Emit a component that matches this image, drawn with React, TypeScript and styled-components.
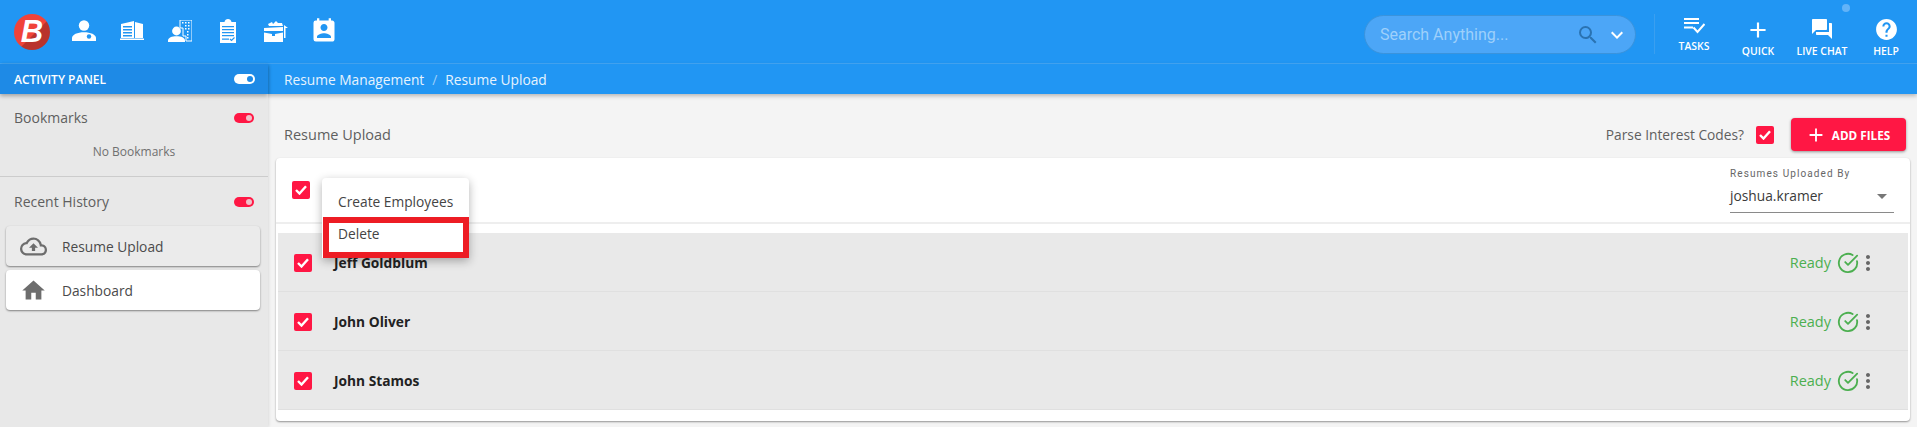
import React from 'react'
import styled, { createGlobalStyle } from 'styled-components'
import {
  MdAdd,
  MdArrowDropDown,
  MdHelp,
  MdHome,
  MdKeyboardArrowDown,
  MdMoreVert,
  MdOutlineCloudUpload,
  MdPermContactCalendar,
  MdQuestionAnswer,
  MdSearch,
} from 'react-icons/md'
import { LuCircleCheckBig } from 'react-icons/lu'

const GlobalStyle = createGlobalStyle`
  html, body {
    margin: 0;
    padding: 0;
    background: #f4f4f4;
    font-family: "Open Sans", "Liberation Sans", sans-serif;
  }
  * { box-sizing: border-box; }
`

const PersonIcon = () => (
  <svg width="24" height="21" viewBox="0 0 24 21" fill="#fff">
    <circle cx="12" cy="5.500" r="5.200" />
    <path d="M0 21v-3c0-3.600 5.500-5.800 12-5.800s12 2.200 12 5.800v3z" />
    <circle cx="17" cy="16.500" r="2.200" fill="#2196f3" />
  </svg>
)

const BuildingIcon = () => (
  <svg width="24" height="19" viewBox="0 0 24 19" fill="#fff">
    <path d="M1 3l13-3v17H1z" />
    <path d="M15 1l8 2v14h-8z" />
    <path d="M0 17.500h24V19H0z" />
    <path d="M3 5h9v1.400H3zM3 8h9v1.400H3zM3 11h9v1.400H3zM3 14h9v1.400H3z" fill="#2196f3" />
  </svg>
)

const AgentIcon = () => (
  <svg width="24" height="22" viewBox="0 0 24 22" fill="#fff">
    <path d="M12 0h12v21h-6v-5h-3V8h-3z" fill="none" stroke="#fff" strokeWidth="1" />
    <path d="M14 2h1.500v1.500H14zM17 2h1.500v1.500H17zM20 2h1.500v1.500H20zM17 5h1.500v1.500H17zM20 5h1.500v1.500H20zM17 8h1.500v1.500H17zM20 8h1.500v1.500H20zM19 11h1.500v1.500H19zM19 14h1.500v1.500H19zM19 17h1.500v1.500H19z" />
    <circle cx="8.500" cy="11" r="4.400" />
    <path d="M0 22v-1.500c0-2.800 3.800-4.300 8.500-4.300s8.500 1.500 8.500 4.300V22z" />
  </svg>
)

const ClipboardIcon = () => (
  <svg width="16" height="24" viewBox="0 0 16 24" fill="#fff">
    <path d="M0 3h4.500c.3-1.700 1.800-3 3.500-3s3.200 1.300 3.500 3H16v21H0z" />
    <path d="M2 7h12v1.300H2zM2 10h12v1.300H2zM2 13h12v1.300H2zM2 16h12v1.300H2zM2 19.500h7v1.300H2z" fill="#2196f3" />
    <path d="M10 20l1.500 1.500 3-3" fill="none" stroke="#2196f3" strokeWidth="1.200" />
  </svg>
)

const BriefcaseIcon = () => (
  <svg width="24" height="24" viewBox="0 0 24 24" fill="#fff">
    <path d="M4 5l4-2 1 2 3-3 2 2 4 0 1 3H5z" />
    <path d="M0 9l19-1 0 4H0z" />
    <path d="M0 13.500l8 1.500v2h3v-2l8-1.500V23H0z" />
    <path d="M20 6l4 3-2.500 0V19h-1.500z" />
  </svg>
)

const TasksIcon = () => (
  <svg width="21" height="16" viewBox="0 0 21 16" fill="none" stroke="#fff" strokeWidth="1.800">
    <path d="M0 1h15M0 5h15M0 9.500h9" />
    <path d="M9.500 9.500l4 4.500 7-8" strokeWidth="2" />
  </svg>
)

const CheckMark = () => (
  <svg width="12" height="10" viewBox="0 0 12 10" fill="none" stroke="#fff" strokeWidth="2.400">
    <path d="M1 5l3.500 3.500L11 1.200" />
  </svg>
)

const Logo = styled.div`
  width: 36px;
  height: 36px;
  flex: none;
  border-radius: 50%;
  background: linear-gradient(135deg, #f0433a 55%, #b9332c 56%);
  display: flex;
  align-items: center;
  justify-content: center;
  color: #fff;
  font-family: "Liberation Sans", Arial, sans-serif;
  font-weight: 700;
  font-style: italic;
  font-size: 31px;
  line-height: 1;
`

const Page = styled.div`
  width: 1917px;
  height: 427px;
  overflow: hidden;
  display: flex;
  flex-direction: column;
`

const Header = styled.header`
  height: 64px;
  flex: none;
  background: #2196f3;
  border-bottom: 1px solid #43a6f5;
  display: flex;
  align-items: center;
  padding-left: 14px;
`

const NavIcons = styled.nav`
  display: flex;
  align-items: center;
  margin: -2px 0 0 10px;
`

const NavIcon = styled.div`
  width: 48px;
  height: 30px;
  display: flex;
  align-items: center;
  justify-content: center;
`

const HeaderRight = styled.div`
  margin-left: auto;
  margin-right: -1px;
  align-self: stretch;
  display: flex;
  align-items: flex-start;
  position: relative;
`

const Search = styled.div`
  width: 272px;
  height: 39px;
  margin-top: 15px;
  border-radius: 20px;
  background: #4ca6f7;
  border: 1px solid #3a93dc;
  display: flex;
  align-items: center;
  padding: 0 6px 0 15px;
  font-family: Roboto, "Liberation Sans", sans-serif;
  font-size: 16px;
  color: #9ed0fb;
`

const SearchText = styled.span`
  flex: 1;
`

const SearchDivider = styled.div`
  width: 1px;
  height: 40px;
  margin: 14px 7px 0 18px;
  background: #3a9ff0;
`

const ActionList = styled.div`
  display: flex;
  align-items: flex-start;
`

const Action = styled.div<{ $top: number; $gap: number }>`
  width: 64px;
  display: flex;
  flex-direction: column;
  align-items: center;
  gap: ${(p) => p.$gap}px;
  color: #fff;
  font-size: 10.400px;
  font-weight: 600;
  line-height: 13px;
  padding-top: ${(p) => p.$top}px;
  white-space: nowrap;
`

const StatusDot = styled.span`
  position: absolute;
  width: 8px;
  height: 8px;
  border-radius: 50%;
  background: #62b3f8;
  top: 4px;
  right: 68px;
`

const Body = styled.div`
  flex: 1;
  display: flex;
  min-height: 0;
`

const SideColumn = styled.aside`
  width: 268px;
  flex: none;
  display: flex;
  flex-direction: column;
  background: #e8e8e8;
  box-shadow: 1px 0 3px rgba(0, 0, 0, 0.1);
  position: relative;
  z-index: 1;
`

const ActivityBar = styled.div`
  height: 30px;
  flex: none;
  background: #1e8ae6;
  box-shadow: 0 2px 4px rgba(0, 0, 0, 0.3);
  display: flex;
  align-items: center;
  justify-content: space-between;
  padding: 0 13px 0 14px;
  color: #fff;
  font-size: 12px;
  font-weight: 600;
`

const Toggle = styled.span<{ $on: string; $knob: string; $w: number }>`
  width: ${(p) => p.$w}px;
  height: 10px;
  border-radius: 5px;
  background: ${(p) => p.$on};
  display: flex;
  align-items: center;
  justify-content: flex-end;
  padding-right: 2px;
  &::after {
    content: '';
    width: 6px;
    height: 6px;
    border-radius: 50%;
    background: ${(p) => p.$knob};
  }
`

const SideSection = styled.section<{ $border?: boolean }>`
  padding: ${(p) => (p.$border ? '13px' : '14px')} 14px 0;
  height: ${(p) => (p.$border ? '83px' : 'auto')};
  border-bottom: ${(p) => (p.$border ? '1px solid #cccccc' : 'none')};
`

const SideTitleRow = styled.div`
  display: flex;
  align-items: center;
  justify-content: space-between;
  font-size: 14px;
  line-height: 22px;
  color: #5f5f5f;
`

const EmptyNote = styled.div`
  margin-top: 15px;
  text-align: center;
  font-size: 12px;
  line-height: 15px;
  color: #707070;
`

const HistoryList = styled.div`
  display: flex;
  flex-direction: column;
  gap: 4px;
  padding: 13px 8px 0 6px;
`

const HistoryItem = styled.div<{ $active?: boolean }>`
  height: 40px;
  border-radius: 4px;
  background: ${(p) => (p.$active ? '#ebebeb' : '#ffffff')};
  box-shadow: 0 1px 2px rgba(0, 0, 0, 0.45);
  display: flex;
  align-items: center;
  font-size: 13.750px;
  color: #4a4a4a;
`

const HistoryIcon = styled.span`
  width: 56px;
  padding-left: 14px;
  display: flex;
  color: #6d6d6d;
  font-size: 27px;
`

const MainColumn = styled.main`
  flex: 1;
  min-width: 0;
  display: flex;
  flex-direction: column;
`

const Breadcrumbs = styled.div`
  height: 30px;
  flex: none;
  background: #2196f3;
  box-shadow: 0 2px 4px rgba(0, 0, 0, 0.25);
  display: flex;
  align-items: center;
  padding-left: 16px;
  gap: 8px;
  color: #e6f3fe;
  font-size: 13.750px;
`

const Crumbsep = styled.span`
  color: #9ccffa;
`

const Content = styled.div`
  flex: 1;
  padding: 0 7px 0 8px;
  position: relative;
`

const TitleRow = styled.div`
  height: 64px;
  display: flex;
  align-items: center;
  padding: 17px 4px 0 8px;
`

const PageTitle = styled.h1`
  margin: 0;
  font-size: 14.500px;
  font-weight: 400;
  color: #5f5f5f;
  flex: 1;
`

const ParseLabel = styled.span`
  font-size: 13.750px;
  color: #5f5f5f;
  margin-right: 12px;
`

const Checkbox = styled.span`
  width: 18px;
  height: 18px;
  flex: none;
  border-radius: 2px;
  background: #ff1744;
  display: inline-flex;
  align-items: center;
  justify-content: center;
`

const AddButton = styled.button`
  margin-left: 17px;
  width: 115px;
  height: 33px;
  border: 0;
  border-radius: 4px;
  background: #ff1744;
  box-shadow: 0 1px 3px rgba(0, 0, 0, 0.4);
  color: #fff;
  font-family: inherit;
  font-size: 11.700px;
  font-weight: 700;
  display: flex;
  align-items: center;
  justify-content: center;
  gap: 5px;
  padding: 0 2px 0 0;
`

const Card = styled.div`
  height: 263px;
  background: #fff;
  border-radius: 4px;
  box-shadow: 0 1px 2px rgba(0, 0, 0, 0.4);
  display: flex;
  flex-direction: column;
`

const CardHeader = styled.div`
  height: 66px;
  flex: none;
  border-bottom: 2px solid #eeeeee;
  display: flex;
  align-items: center;
  justify-content: space-between;
  padding: 0 16px 0 16px;
`

const Picker = styled.div`
  width: 164px;
`

const PickerLabel = styled.div`
  font-family: Roboto, "Liberation Sans", sans-serif;
  font-size: 10px;
  letter-spacing: 1.100px;
  line-height: 12px;
  color: #666;
`

const PickerValue = styled.div`
  height: 33px;
  border-bottom: 1px solid #8a8a8a;
  display: flex;
  align-items: center;
  justify-content: space-between;
  font-size: 13.750px;
  color: #3a3a3a;
`

const PickerArrow = styled.span`
  display: flex;
  color: #777;
  font-size: 24px;
  margin-right: 0;
`

const Rows = styled.div`
  margin: 9px 2px 0;
`

const Row = styled.div`
  height: 59px;
  background: #e9e9e9;
  border-bottom: 1px solid #e0e0e0;
  display: flex;
  align-items: center;
  padding: 1px 28px 0 16px;
`

const RowName = styled.span`
  margin-left: 22px;
  flex: 1;
  font-size: 13.750px;
  font-weight: 700;
  color: #222;
`

const ReadyText = styled.span`
  font-size: 14.500px;
  color: #4caf50;
`

const ReadyIcon = styled.span`
  display: flex;
  color: #4caf50;
  font-size: 22px;
  margin-left: 6px;
`

const MoreIcon = styled.span`
  display: flex;
  color: #666;
  font-size: 24px;
  margin-left: -3px;
`

const Menu = styled.div`
  position: absolute;
  left: 54px;
  top: 84px;
  width: 147px;
  height: 80px;
  background: #fff;
  border-radius: 4px 4px 0 0;
  box-shadow: 0 3px 10px rgba(0, 0, 0, 0.3);
  font-size: 13.750px;
  color: #444;
  z-index: 2;
`

const MenuItem = styled.div`
  height: 39px;
  padding: 15px 0 0 16px;
  line-height: 18px;
`

const DeleteItem = styled.div`
  height: 41px;
  border: 6px solid #ed1c24;
  margin-left: 1px;
  padding: 1px 0 0 9px;
  line-height: 19px;
`

const names = ['Jeff Goldblum', 'John Oliver', 'John Stamos']

const App: React.FC = () => {
  return (
    <Page>
      <GlobalStyle />
      <Header>
        <Logo>B</Logo>
        <NavIcons>
          <NavIcon><PersonIcon /></NavIcon>
          <NavIcon><BuildingIcon /></NavIcon>
          <NavIcon><AgentIcon /></NavIcon>
          <NavIcon><ClipboardIcon /></NavIcon>
          <NavIcon><BriefcaseIcon /></NavIcon>
          <NavIcon><MdPermContactCalendar size={28} color="#fff" /></NavIcon>
        </NavIcons>
        <HeaderRight>
          <StatusDot />
          <Search>
            <SearchText>Search Anything...</SearchText>
            <MdSearch size={24} color="#2a73b2" />
            <MdKeyboardArrowDown size={24} color="#fff" style={{ marginLeft: 5 }} />
          </Search>
          <SearchDivider />
          <ActionList>
            <Action $top={18} $gap={6}>
              <TasksIcon />
              <span>TASKS</span>
            </Action>
            <Action $top={17} $gap={2}>
              <MdAdd size={26} color="#fff" />
              <span>QUICK</span>
            </Action>
            <Action $top={17} $gap={4}>
              <MdQuestionAnswer size={24} color="#fff" />
              <span>LIVE CHAT</span>
            </Action>
            <Action $top={17} $gap={3}>
              <MdHelp size={25} color="#fff" />
              <span>HELP</span>
            </Action>
          </ActionList>
        </HeaderRight>
      </Header>
      <Body>
        <SideColumn>
          <ActivityBar>
            ACTIVITY PANEL
            <Toggle $on="#ffffff" $knob="#1e8ae6" $w={21} />
          </ActivityBar>
          <SideSection $border>
            <SideTitleRow>
              Bookmarks
              <Toggle $on="#ff1744" $knob="#f0c0c8" $w={20} />
            </SideTitleRow>
            <EmptyNote>No Bookmarks</EmptyNote>
          </SideSection>
          <SideSection>
            <SideTitleRow>
              Recent History
              <Toggle $on="#ff1744" $knob="#f0c0c8" $w={20} />
            </SideTitleRow>
          </SideSection>
          <HistoryList>
            <HistoryItem $active>
              <HistoryIcon><MdOutlineCloudUpload /></HistoryIcon>
              Resume Upload
            </HistoryItem>
            <HistoryItem>
              <HistoryIcon><MdHome /></HistoryIcon>
              Dashboard
            </HistoryItem>
          </HistoryList>
        </SideColumn>
        <MainColumn>
          <Breadcrumbs>
            Resume Management <Crumbsep>/</Crumbsep> Resume Upload
          </Breadcrumbs>
          <Content>
            <TitleRow>
              <PageTitle>Resume Upload</PageTitle>
              <ParseLabel>Parse Interest Codes?</ParseLabel>
              <Checkbox><CheckMark /></Checkbox>
              <AddButton><MdAdd size={22} />ADD FILES</AddButton>
            </TitleRow>
            <Card>
              <CardHeader>
                <Checkbox><CheckMark /></Checkbox>
                <Picker>
                  <PickerLabel>Resumes Uploaded By</PickerLabel>
                  <PickerValue>
                    joshua.kramer
                    <PickerArrow><MdArrowDropDown /></PickerArrow>
                  </PickerValue>
                </Picker>
              </CardHeader>
              <Rows>
                {names.map((name) => (
                  <Row key={name}>
                    <Checkbox><CheckMark /></Checkbox>
                    <RowName>{name}</RowName>
                    <ReadyText>Ready</ReadyText>
                    <ReadyIcon><LuCircleCheckBig /></ReadyIcon>
                    <MoreIcon><MdMoreVert /></MoreIcon>
                  </Row>
                ))}
              </Rows>
            </Card>
            <Menu>
              <MenuItem>Create Employees</MenuItem>
              <DeleteItem>Delete</DeleteItem>
            </Menu>
          </Content>
        </MainColumn>
      </Body>
    </Page>
  )
}

export default App
